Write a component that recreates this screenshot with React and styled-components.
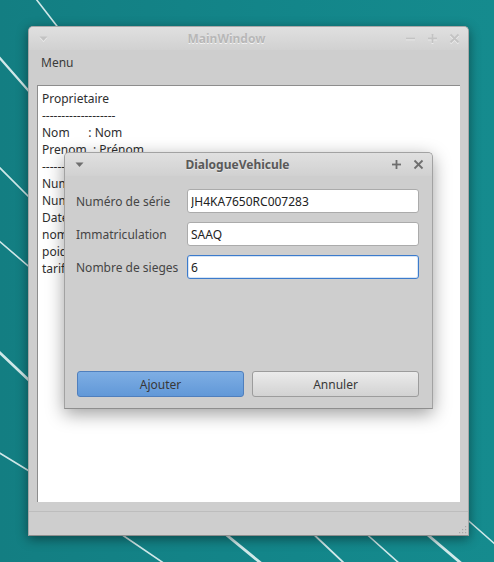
import styled, { createGlobalStyle } from 'styled-components';

const GlobalStyle = createGlobalStyle`
  html, body {
    margin: 0;
    padding: 0;
  }
  body {
    font-family: "Noto Sans", "DejaVu Sans", sans-serif;
  }
`;

const Desktop = styled.div`
  position: relative;
  width: 494px;
  height: 562px;
  overflow: hidden;
  background: linear-gradient(90deg, #137e82 0%, #13868a 60%, #158b8e 100%);
`;

const Wallpaper = styled.svg`
  position: absolute;
  inset: 0;
`;

const Window = styled.div`
  position: absolute;
  left: ${({ $left }) => $left}px;
  top: ${({ $top }) => $top}px;
  width: ${({ $width }) => $width}px;
  height: ${({ $height }) => $height}px;
  box-sizing: border-box;
  display: flex;
  flex-direction: column;
  background: #cecece;
  border: 1px solid ${({ $active }) => ($active ? '#a2a2a2' : '#a8a8a8')};
  border-bottom-color: #8e8e8e;
  border-radius: 5px 5px 0 0;
  box-shadow: ${({ $active }) =>
    $active ? '0 5px 18px rgba(0, 0, 0, 0.38)' : '0 3px 12px rgba(0, 0, 0, 0.45)'};
`;

const TitleBar = styled.div`
  height: 23px;
  flex: none;
  display: flex;
  align-items: center;
  padding: 0 3px;
  border-radius: 4px 4px 0 0;
  background: linear-gradient(#e0e0e0, #d1d1d1);
`;

const TitleButton = styled.span`
  width: 22px;
  height: 22px;
  display: flex;
  align-items: center;
  justify-content: center;
  color: ${({ $active }) => ($active ? '#6e6e6e' : '#c3c3c3')};
  filter: ${({ $active }) => ($active ? 'none' : 'drop-shadow(0 1px 0 #ececec)')};
`;

const TitleText = styled.div`
  flex: 1;
  text-align: center;
  font-size: 12px;
  font-weight: 700;
  color: ${({ $active }) => ($active ? '#595959' : '#b7b7b7')};
  text-shadow: ${({ $active }) => ($active ? '0 1px 0 #e6e6e6' : '0 1px 0 #f2f2f2')};
`;

const MenuBar = styled.div`
  height: 24px;
  flex: none;
  display: flex;
  align-items: center;
  padding: 0 12px;
`;

const MenuItem = styled.span`
  font-size: 12px;
  color: #3a3a3a;
`;

const Central = styled.div`
  flex: 1;
  display: flex;
  flex-direction: column;
  padding: 11px 8px 9px;
  min-height: 0;
`;

const TextArea = styled.div`
  flex: 1;
  background: #fff;
  border-top: 1px solid #8d8d8d;
  border-left: 1px solid #8d8d8d;
  padding: 4px 4px;
  font-size: 12px;
  line-height: 17px;
  color: #2e2e2e;
  white-space: pre;
  overflow: hidden;
`;

const StatusBar = styled.div`
  height: 22px;
  flex: none;
  display: flex;
  justify-content: flex-end;
  align-items: flex-end;
  border-top: 1px solid #bdbdbd;
  padding: 0 1px 1px 0;
`;

const DialogBody = styled.div`
  flex: 1;
  display: flex;
  flex-direction: column;
  justify-content: space-between;
  padding: 13px 13px 11px 11px;
`;

const FormGrid = styled.div`
  display: grid;
  grid-template-columns: 104px 1fr;
  column-gap: 7px;
  row-gap: 9px;
  align-items: center;
`;

const Label = styled.label`
  font-size: 12px;
  color: #454545;
  white-space: nowrap;
`;

const Field = styled.input`
  height: 24px;
  box-sizing: border-box;
  width: 100%;
  margin: 0;
  padding: 0 3px;
  border-radius: 3px;
  border: 1px solid ${({ $focused }) => ($focused ? '#3c7bcc' : '#ababab')};
  box-shadow: ${({ $focused }) => ($focused ? 'inset 0 0 0 1px rgba(90, 150, 220, 0.25)' : 'none')};
  background: #fff;
  font-family: "Noto Sans", "DejaVu Sans", sans-serif;
  font-size: 12px;
  color: #222;
  outline: none;
`;

const ButtonRow = styled.div`
  display: flex;
  gap: 8px;
  padding-left: 1px;
`;

const PushButton = styled.button`
  flex: 1;
  height: 26px;
  margin: 0;
  border-radius: 3px;
  font-family: "Noto Sans", "DejaVu Sans", sans-serif;
  font-size: 12px;
  color: #383838;
  border: 1px solid ${({ $primary }) => ($primary ? '#4f7fbd' : '#9c9c9c')};
  background: ${({ $primary }) =>
    $primary ? 'linear-gradient(#7eaee4, #6198d8)' : 'linear-gradient(#ebebeb, #d2d2d2)'};
`;

const DownArrow = () => (
  <svg width="9" height="6" viewBox="0 0 9 6">
    <polygon points="0.5,0.5 8.5,0.5 4.5,5" fill="currentColor" />
  </svg>
);

const MinusIcon = () => (
  <svg width="11" height="11" viewBox="0 0 11 11">
    <line x1="1" y1="5.5" x2="10" y2="5.5" stroke="currentColor" strokeWidth="1.6" />
  </svg>
);

const PlusIcon = () => (
  <svg width="11" height="11" viewBox="0 0 11 11">
    <line x1="1" y1="5.5" x2="10" y2="5.5" stroke="currentColor" strokeWidth="1.8" />
    <line x1="5.5" y1="1" x2="5.5" y2="10" stroke="currentColor" strokeWidth="1.8" />
  </svg>
);

const CloseIcon = () => (
  <svg width="11" height="11" viewBox="0 0 11 11">
    <line x1="1.5" y1="1.5" x2="9.5" y2="9.5" stroke="currentColor" strokeWidth="1.8" />
    <line x1="9.5" y1="1.5" x2="1.5" y2="9.5" stroke="currentColor" strokeWidth="1.8" />
  </svg>
);

const SizeGrip = () => (
  <svg width="10" height="10" viewBox="0 0 10 10">
    {[
      [8, 2], [8, 5], [8, 8], [5, 5], [5, 8], [2, 8],
    ].map(([x, y]) => (
      <rect key={`${x}-${y}`} x={x} y={y} width="1.2" height="1.2" fill="#a8a8a8" />
    ))}
  </svg>
);

// segments of the wallpaper stripes that show around the windows
const stripes = [
  { x1: 36, y1: -1, x2: 60, y2: 30, w: 1.6 },
  { x1: -2, y1: 56, x2: 34, y2: 97, w: 2.2 },
  { x1: -2, y1: 166, x2: 34, y2: 202, w: 1.6 },
  { x1: -2, y1: 240, x2: 34, y2: 271, w: 1.6 },
  { x1: -2, y1: 351, x2: 34, y2: 385, w: 2.6 },
  { x1: -2, y1: 452, x2: 34, y2: 474, w: 1.6 },
  { x1: 115, y1: 530, x2: 165, y2: 564, w: 1.6 },
  { x1: 218, y1: 528, x2: 262, y2: 564, w: 2.8 },
  { x1: 308, y1: 529, x2: 345, y2: 564, w: 1.8 },
  { x1: 362, y1: 530, x2: 400, y2: 564, w: 1.6 },
  { x1: 422, y1: 530, x2: 462, y2: 564, w: 2.8 },
  { x1: 462, y1: 515, x2: 496, y2: 545, w: 1.6 },
];

const reportLines = [
  'Proprietaire',
  '-------------------',
  'Nom      : Nom',
  'Prenom  : Prénom',
  '-------------------',
  'Numéro de série : JH4KA7650RC007283',
  "Numéro d'immatriculation : SAAQ",
  "Date d'inscription : 2019-01-01",
  'nombre de sieges : 6',
  'poids : 1500',
  'tarif : 0',
];

function App() {
  return (
    <>
      <GlobalStyle />
      <Desktop>
        <Wallpaper width="494" height="562" viewBox="0 0 494 562">
          {stripes.map((s, i) => (
            <line
              key={i}
              x1={s.x1}
              y1={s.y1}
              x2={s.x2}
              y2={s.y2}
              stroke="#e6f4f4"
              strokeOpacity="0.9"
              strokeWidth={s.w}
              strokeLinecap="round"
            />
          ))}
        </Wallpaper>

        <Window $left={28} $top={26} $width={441} $height={510}>
          <TitleBar>
            <TitleButton>
              <DownArrow />
            </TitleButton>
            <TitleText>MainWindow</TitleText>
            <TitleButton>
              <MinusIcon />
            </TitleButton>
            <TitleButton>
              <PlusIcon />
            </TitleButton>
            <TitleButton>
              <CloseIcon />
            </TitleButton>
          </TitleBar>
          <MenuBar>
            <MenuItem>Menu</MenuItem>
          </MenuBar>
          <Central>
            <TextArea>{reportLines.join('\n')}</TextArea>
          </Central>
          <StatusBar>
            <SizeGrip />
          </StatusBar>
        </Window>

        <Window $active $left={64} $top={152} $width={369} $height={257}>
          <TitleBar>
            <TitleButton $active>
              <DownArrow />
            </TitleButton>
            <TitleText $active>DialogueVehicule</TitleText>
            <TitleButton $active>
              <PlusIcon />
            </TitleButton>
            <TitleButton $active>
              <CloseIcon />
            </TitleButton>
          </TitleBar>
          <DialogBody>
            <FormGrid>
              <Label htmlFor="serie">Numéro de série</Label>
              <Field id="serie" readOnly value="JH4KA7650RC007283" />
              <Label htmlFor="immat">Immatriculation</Label>
              <Field id="immat" readOnly value="SAAQ" />
              <Label htmlFor="sieges">Nombre de sieges</Label>
              <Field id="sieges" readOnly value="6" $focused />
            </FormGrid>
            <ButtonRow>
              <PushButton $primary type="button">Ajouter</PushButton>
              <PushButton type="button">Annuler</PushButton>
            </ButtonRow>
          </DialogBody>
        </Window>
      </Desktop>
    </>
  );
}

export default App;
